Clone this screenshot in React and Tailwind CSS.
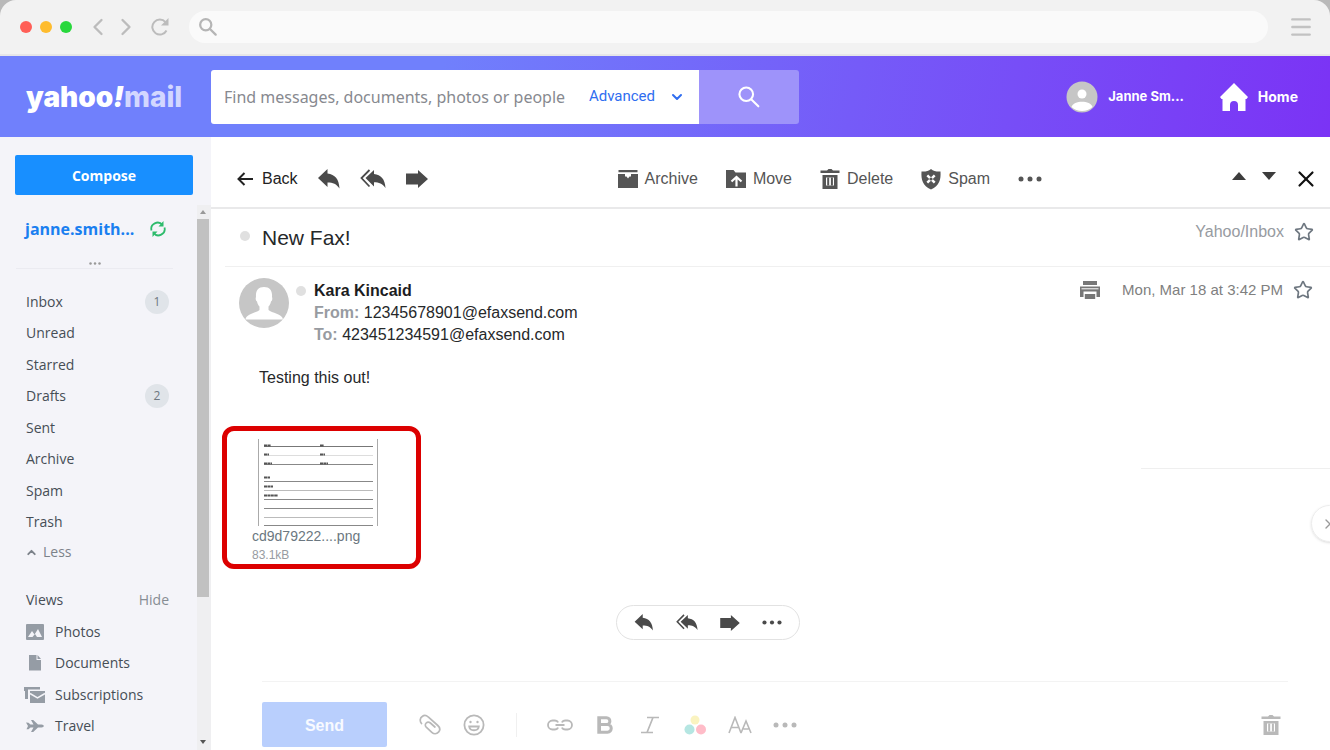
import React, { useState } from 'react';
import { ChevronDown, ChevronLeft, ChevronRight, ChevronUp, Menu, Star, X } from 'lucide-react';

const folders = [
  { name: 'Inbox', count: 1 },
  { name: 'Unread' },
  { name: 'Starred' },
  { name: 'Drafts', count: 2 },
  { name: 'Sent' },
  { name: 'Archive' },
  { name: 'Spam' },
  { name: 'Trash' },
];

const SearchIcon = ({ className = 'w-5 h-5', strokeWidth = 2.2 }) => (
  <svg viewBox="0 0 20 20" className={className} fill="none" stroke="currentColor" strokeWidth={strokeWidth} strokeLinecap="round">
    <circle cx="7.500" cy="7.500" r="6.200" />
    <path d="m12.200 12.200 6.300 6.300" />
  </svg>
);

const ReloadIcon = () => (
  <svg viewBox="0 0 18 18" className="w-[18px] h-[18px]" fill="none" stroke="currentColor" strokeWidth="2">
    <path d="M15.500 12.500A7.500 7.500 0 1 1 14.500 4.200" />
    <path d="M17.500 0v7.500H10Z" fill="currentColor" stroke="none" />
  </svg>
);

const ReplyIcon = ({ className = 'w-[22px] h-5' }) => (
  <svg viewBox="0 0 22 20" className={className} fill="currentColor">
    <path d="M0 9 9.500 0v4.500C17 5.500 21 10 21.500 19.500 18.500 15 15 13.500 9.500 13.500V18Z" />
  </svg>
);

const ReplyAllIcon = ({ className = 'w-[26px] h-5' }) => (
  <svg viewBox="0 0 26 20" className={className} fill="currentColor">
    <path d="M5.500 9 14 1v4c7 .8 11 5 11.500 14-3-4.500-6.500-5.800-11.500-5.800V17.500Z" />
    <path d="M9.500 1 1.500 9l8 8.500" fill="none" stroke="currentColor" strokeWidth="1.800" />
  </svg>
);

const ForwardIcon = ({ className = 'w-[22px] h-[18px]' }) => (
  <svg viewBox="0 0 22 18" className={className} fill="currentColor">
    <path d="M0 3.500h12V0L22 9l-10 9v-3.500H0Z" />
  </svg>
);

const DotsIcon = ({ className = 'w-6 h-1.5' }) => (
  <svg viewBox="0 0 24 6" className={className} fill="currentColor">
    <circle cx="3" cy="3" r="2.500" />
    <circle cx="12" cy="3" r="2.500" />
    <circle cx="21" cy="3" r="2.500" />
  </svg>
);

const ArchiveIcon = () => (
  <svg viewBox="0 0 20 20" className="w-5 h-5" fill="currentColor">
    <path d="M.5 1h19v2.300H.5zM0 5h7v2.500h1.500L10 9.500l1.500-2H13V5h7v14H0Z" />
  </svg>
);

const MoveIcon = () => (
  <svg viewBox="0 0 20 20" className="w-5 h-5">
    <path d="M0 1h7.500l2 2.500H20V19H0Z" fill="currentColor" />
    <path d="M5.500 12.500 10.500 8l5 4.500M10.500 9v8.500" fill="none" stroke="#fff" strokeWidth="2.200" />
  </svg>
);

const TrashIcon = ({ className = 'w-5 h-5' }) => (
  <svg viewBox="0 0 20 20" className={className}>
    <path d="M.5 1.500H7L8.500 0h3L13 1.500h6.500V4H.5ZM2.500 6h15v14h-15Z" fill="currentColor" />
    <path d="M6 8.500h8v8H6z" fill="#fff" />
    <path d="M7.200 8.500h2v8h-2zM10.900 8.500h2v8h-2z" fill="currentColor" />
  </svg>
);

const SpamIcon = () => (
  <svg viewBox="0 0 20 21" className="w-5 h-[21px]">
    <path d="M10 0c2.500 2 5.500 2.800 9.500 2.500.5 8-1 14-9.500 18C1.500 16.500 0 10.500.5 2.500 4.500 2.800 7.500 2 10 0Z" fill="currentColor" />
    <path d="m6.300 6.300 7.400 7.400M13.700 6.300l-7.400 7.400" fill="none" stroke="#fff" strokeWidth="2.400" />
    <circle cx="10" cy="10" r="1.600" fill="currentColor" />
  </svg>
);

const PrintIcon = () => (
  <svg viewBox="0 0 20 20" className="w-5 h-5" fill="#777">
    <path d="M3 1h14v4H3zM0 6.500h20V17h-3.500v-5.500h-13V17H0zM4.800 14h10.400v5H4.800z" />
    <path d="M1.500 8.300h17v1h-17z" fill="#fff" />
  </svg>
);

const PhotosIcon = () => (
  <svg viewBox="0 0 18 16" className="w-[18px] h-4">
    <rect width="18" height="16" rx="1" fill="currentColor" />
    <path d="m2 13 4-6 2.500 3.500L12 5l4 8Z" fill="#f4f4f9" />
    <path d="m6.500 13 2.500-3 2 3Z" fill="currentColor" />
  </svg>
);

const DocumentIcon = () => (
  <svg viewBox="0 0 14 16" className="w-3.5 h-4" fill="currentColor">
    <path d="M1 0h7.500v5H13v10.500H1ZM9.500 0 13 4H9.500Z" />
  </svg>
);

const SubscriptionsIcon = () => (
  <svg viewBox="0 0 22 18" className="w-[22px] h-[18px]">
    <path d="M0 1h16v2.500H4V13H1V5H0Z" fill="currentColor" />
    <path d="M6 5h15v12H6z" fill="currentColor" />
    <path d="m6 7.500 7.500 4.500L21 7.500" fill="none" stroke="#f4f4f9" strokeWidth="1.500" />
  </svg>
);

const TravelIcon = () => (
  <svg viewBox="0 0 18 14" className="w-[18px] h-3.5" fill="currentColor">
    <path d="m0 3.500 2.500.3L4.500 5.500h3L5 1h2.200l4.800 4.500h3.500c3 0 3 3 0 3H12L7.200 13H5l2.500-4.500h-3l-2 1.700H.5L2 7Z" />
  </svg>
);

const HomeIcon = () => (
  <svg viewBox="0 0 28 28" className="w-7 h-7" fill="currentColor">
    <path d="M14 0 28 14l-1.500 2H25.500v12H18v-6a4 4 0 0 0-8 0v6H2.500V16H1.500L0 14Z" />
  </svg>
);

const SyncIcon = () => (
  <svg viewBox="0 0 16 16" className="w-4 h-4" fill="none" stroke="currentColor" strokeWidth="1.800">
    <path d="M1.500 9.500A6.300 6.300 0 0 1 12.500 4M14.500 6.500A6.300 6.300 0 0 1 3.500 12" />
    <path d="M13.500 0v5.500H8.500ZM2.500 16v-5.500h5Z" fill="currentColor" stroke="none" />
  </svg>
);

const ClipIcon = () => (
  <svg viewBox="0 0 22 22" className="w-[22px] h-[22px]" fill="none" stroke="currentColor" strokeWidth="1.700" strokeLinecap="round">
    <path d="M2.500 9.500C.5 7 1 4 3.200 2.500 5 1 7.500 1.300 9.200 3l9.600 8.500c2.200 2 2.400 4.700.7 6.600-1.800 2-4.700 2-6.700.2L7.500 13.500C6 12 6 10.200 7.200 9c1.200-1.200 2.800-1.200 4.200 0l4.500 4" />
  </svg>
);

const SmileIcon = () => (
  <svg viewBox="0 0 22 22" className="w-[22px] h-[22px]" fill="none" stroke="currentColor" strokeWidth="1.800">
    <circle cx="11" cy="11" r="9.600" />
    <path d="M6.200 12.500c.5 5 9.100 5 9.600 0Z" />
    <circle cx="7.500" cy="8" r="1.200" fill="currentColor" stroke="none" />
    <circle cx="14.500" cy="8" r="1.200" fill="currentColor" stroke="none" />
  </svg>
);

const LinkIcon = () => (
  <svg viewBox="0 0 26 12" className="w-[26px] h-3" fill="none" stroke="currentColor" strokeWidth="1.800">
    <path d="M11 3.500C10.500 2 9 1.500 7.500 1.500H5.500a4.500 4.500 0 0 0 0 9h2c1.500 0 3-.5 3.500-2M15 3.500c.5-1.500 2-2 3.500-2h2a4.500 4.500 0 0 1 0 9h-2c-1.500 0-3-.5-3.500-2M8.500 6h9" />
  </svg>
);

const BoldIcon = () => (
  <svg viewBox="0 0 16 18" className="w-4 h-[18px]" fill="none" stroke="currentColor" strokeWidth="3">
    <path d="M1.800 1.800h7.700c4.500 0 4.500 6.700 0 6.700H3h7.500c5 0 5 7.700 0 7.700H1.800ZM2.500 1.500v15" />
  </svg>
);

const ItalicIcon = () => (
  <svg viewBox="0 0 18 18" className="w-[18px] h-[18px]" fill="none" stroke="currentColor" strokeWidth="1.700">
    <path d="M6 1.500h12M0 16.500h12M12 1.500l-6 15" />
  </svg>
);

const ColorIcon = () => (
  <svg viewBox="0 0 22 20" className="w-[22px] h-5">
    <circle cx="11" cy="5" r="4.500" fill="#faf3c0" />
    <circle cx="5.500" cy="14.500" r="5" fill="#b5e6e2" />
    <circle cx="17" cy="14.500" r="5" fill="#ffbcc8" />
  </svg>
);

const FontSizeIcon = () => (
  <svg viewBox="0 0 24 18" className="w-6 h-[18px]" fill="none" stroke="currentColor" strokeWidth="1.600">
    <path d="M1 17 7 1.500 13 17M3.500 11.500h7M13 17l5-12 5 12M15.500 13h5" />
  </svg>
);

const SenderAvatar = () => (
  <svg viewBox="0 0 50 50" className="w-[50px] h-[50px] shrink-0">
    <circle cx="25" cy="25" r="25" fill="#c6c6c6" />
    <path d="M25 9c6 0 8.500 4 8 10 .8 1.500 0 4-1 4.500-.5 2.500-1.500 4-2.500 5v3.500c3 3 14 3.500 14.500 9.500H6.500C7 35.500 17.500 35 20.500 32v-3.500c-1-1-2-2.500-2.500-5-1-.5-1.800-3-1-4.500-.5-6 2-10 8-10Z" fill="#fff" />
  </svg>
);

const UserAvatar = () => (
  <svg viewBox="0 0 32 32" className="w-8 h-8">
    <circle cx="16" cy="16" r="15.500" fill="#c6c6c6" />
    <circle cx="16" cy="13" r="4.500" fill="#fff" />
    <path d="M5.500 26c2-7 19-7 21 0a15.500 15.500 0 0 1-21 0Z" fill="#fff" />
  </svg>
);

// Form rows of the scanned fax page: y, left label width, right label width, line colour
const faxRows = [
  [8, 7, 4, '#777'],
  [17, 5, 5, '#ddd'],
  [26, 8, 8, '#888'],
  [43, 6, 0, '#888', 3],
  [52, 9, 0, '#bbb', 3],
  [61, 14, 0, '#888', 3],
  [70, 0, 0, '#888'],
  [79, 0, 0, '#bbb'],
  [87, 0, 0, '#888'],
];

const FaxThumb = () => (
  <svg viewBox="0 0 120 88" className="w-[120px] h-[88px]">
    <path d="M.5 0v87M119.500 0v87" stroke="#aaa" />
    {faxRows.map(([y, a, b, color, lift = 0]) => (
      <g key={y}>
        <path d={`M6 ${y - 0.5}h109`} stroke={color} />
        {a > 0 && <path d={`M6 ${y - 1.5 - lift}h${a}`} stroke="#555" strokeWidth="2" strokeDasharray="3 .4" />}
        {b > 0 && <path d={`M62 ${y - 1.5}h${b}`} stroke="#555" strokeWidth="2" strokeDasharray="3 .4" />}
      </g>
    ))}
  </svg>
);

function BrowserBar() {
  return (
    <div className="bg-[#b9b9b9] shrink-0">
      <div className="h-14 bg-[#f2f2f2] rounded-t-2xl border-b-2 border-[#e6e6e8] flex items-center pl-5 pr-4">
        <div className="flex gap-2">
          <span className="w-3 h-3 rounded-full bg-[#ff5f57]" />
          <span className="w-3 h-3 rounded-full bg-[#febc2e]" />
          <span className="w-3 h-3 rounded-full bg-[#28d83c]" />
        </div>
        <div className="flex items-center ml-3 text-[#bcbcbc]">
          <button type="button" aria-label="Previous page"><ChevronLeft size={28} strokeWidth={2} /></button>
          <button type="button" aria-label="Next page"><ChevronRight size={28} strokeWidth={2} /></button>
          <button type="button" aria-label="Reload" className="ml-[11px]"><ReloadIcon /></button>
        </div>
        <label className="flex-1 h-8 ml-5 mr-5 rounded-full bg-[#fafafa] flex items-center pl-2.5 text-[#b5b5b5]">
          <SearchIcon className="w-[18px] h-[18px]" strokeWidth={2.5} />
          <input type="text" aria-label="Address" className="flex-1 bg-transparent outline-none px-2 text-sm text-[#555]" />
        </label>
        <button type="button" aria-label="Browser menu" className="text-[#c2c2c2]"><Menu size={26} strokeWidth={2.2} /></button>
      </div>
    </div>
  );
}

function Header() {
  return (
    <header className="h-[81px] shrink-0 flex items-center bg-[linear-gradient(100deg,#7080fc_0%,#7080fc_33%,#755bf8_64%,#7b33f5_100%)] text-white">
      <a href="#" className="w-[211px] pl-[26px] font-['Inter',sans-serif] text-[28px] leading-8 font-black">
        yahoo<i>!</i><span className="font-extrabold text-[#d3d7ff]">mail</span>
      </a>
      <form className="w-[588px] h-[54px] flex" onSubmit={e => e.preventDefault()}>
        <div className="flex-1 min-w-0 bg-white rounded-l-[3px] flex items-center pl-[13px] pr-3.5">
          <input
            type="text" aria-label="Search mail" placeholder="Find messages, documents, photos or people"
            className="flex-1 min-w-0 outline-none font-['Noto_Sans',sans-serif] text-base text-[#333] placeholder:text-[#87898f]"
          />
          <button type="button" className="flex items-center gap-3.5 font-['Roboto',sans-serif] text-[15px] text-[#2f6df0]">
            Advanced <ChevronDown size={16} strokeWidth={3} />
          </button>
        </div>
        <button type="submit" aria-label="Search" className="w-[100px] bg-[#9e93fa] rounded-r-[3px] flex items-center justify-center">
          <SearchIcon className="w-[22px] h-[22px]" strokeWidth={1.9} />
        </button>
      </form>
      <nav className="ml-auto pr-8 flex items-center gap-9 font-['Inter',sans-serif] font-bold">
        <a href="#" className="flex items-center gap-2.5 text-[13px]"><UserAvatar />Janne Sm...</a>
        <a href="#" className="flex items-center gap-2.5 text-sm"><HomeIcon />Home</a>
      </nav>
    </header>
  );
}

function Sidebar() {
  const views = [
    { name: 'Photos', icon: <PhotosIcon /> },
    { name: 'Documents', icon: <DocumentIcon /> },
    { name: 'Subscriptions', icon: <SubscriptionsIcon /> },
    { name: 'Travel', icon: <TravelIcon /> },
  ];

  return (
    <aside className="w-[211px] shrink-0 bg-[#f4f4f9] flex flex-col font-['Open_Sans',sans-serif] text-sm text-[#464e56]">
      <button type="button" className="mt-[18px] ml-[15px] mr-[18px] h-10 pt-0.5 shrink-0 rounded-[2px] bg-[#188fff] text-white font-bold">
        Compose
      </button>
      <div className="flex-1 min-h-0 flex mt-2.5">
        <div className="flex-1 min-w-0 overflow-hidden">
          <div className="h-12 pl-[25px] pr-[31px] flex items-center justify-between">
            <a href="#" className="text-base font-bold text-[#1a7ff0]">janne.smith...</a>
            <button type="button" aria-label="Refresh" className="text-[#2dbb6c]"><SyncIcon /></button>
          </div>
          <div className="mt-1.5 mb-[17px] ml-4 mr-6 h-2.5 border-b border-[#ebebf1] flex items-center justify-center">
            <DotsIcon className="w-3 h-[3px] text-[#999]" />
          </div>
          <ul className="grid grid-rows-8 h-[252px] pl-[26px] pr-7">
            {folders.map(f => (
              <li key={f.name} className="flex items-center justify-between">
                <a href="#">{f.name}</a>
                {f.count && (
                  <span className="w-6 h-6 rounded-full bg-[#e0e4e9] flex items-center justify-center text-xs text-[#6e7780]">{f.count}</span>
                )}
              </li>
            ))}
          </ul>
          <button type="button" className="h-7 pl-[25px] flex items-center gap-[5px] text-[#7c828a]">
            <ChevronUp size={13} strokeWidth={3.5} /> Less
          </button>
          <div className="mt-[18px] h-8 pl-[26px] pr-7 flex items-center justify-between">
            <span>Views</span>
            <button type="button" className="text-[#878d94]">Hide</button>
          </div>
          <ul className="grid grid-rows-4 h-[126px] pl-6">
            {views.map(v => (
              <li key={v.name}>
                <a href="#" className="h-full flex items-center gap-[9px]">
                  <span className="w-[22px] flex justify-center text-[#959ca5]">{v.icon}</span>
                  {v.name}
                </a>
              </li>
            ))}
          </ul>
        </div>
        <div className="w-3.5 pr-0.5 bg-[#efeff1] flex flex-col items-center">
          <svg viewBox="0 0 6 4" className="w-1.5 h-1 my-[5px] shrink-0" fill="#999"><path d="M3 0 6 4H0Z" /></svg>
          <div className="w-full h-[378px] bg-[#c1c1c1]" />
          <svg viewBox="0 0 6 4" className="w-1.5 h-1 mt-auto mb-1.5 shrink-0" fill="#555"><path d="M0 0h6L3 4Z" /></svg>
        </div>
      </div>
    </aside>
  );
}

function Toolbar() {
  return (
    <div className="h-[72px] shrink-0 border-b-2 border-[#e9e9ea] pt-3.5 pl-[26px] pr-[15px] flex items-center justify-between text-base text-[#4a4a4a]">
      <div className="flex items-center">
        <button type="button" className="flex items-center gap-[9px] text-[#222]">
          <svg viewBox="0 0 16 14" className="w-4 h-3.5" fill="none" stroke="currentColor" strokeWidth="2">
            <path d="M16 7H1.500M7.500 1l-6 6 6 6" />
          </svg>
          Back
        </button>
        <button type="button" aria-label="Reply" className="ml-5"><ReplyIcon /></button>
        <button type="button" aria-label="Reply all" className="ml-5"><ReplyAllIcon /></button>
        <button type="button" aria-label="Forward" className="ml-5"><ForwardIcon /></button>
      </div>
      <div className="flex items-center gap-7 text-[#555]">
        <button type="button" className="flex items-center gap-[7px]"><ArchiveIcon />Archive</button>
        <button type="button" className="flex items-center gap-[7px]"><MoveIcon />Move</button>
        <button type="button" className="flex items-center gap-[7px]"><TrashIcon />Delete</button>
        <button type="button" className="flex items-center gap-[7px]"><SpamIcon />Spam</button>
        <button type="button" aria-label="More"><DotsIcon /></button>
      </div>
      <div className="flex items-center text-[#3c3c3c]">
        <button type="button" aria-label="Previous message" className="mb-1.5">
          <svg viewBox="0 0 14 8" className="w-3.5 h-2" fill="currentColor"><path d="M7 0l7 8H0Z" /></svg>
        </button>
        <button type="button" aria-label="Next message" className="ml-4 mb-1.5">
          <svg viewBox="0 0 14 8" className="w-3.5 h-2" fill="currentColor"><path d="M0 0h14L7 8Z" /></svg>
        </button>
        <button type="button" aria-label="Close" className="ml-[17px] text-[#111]"><X size={26} strokeWidth={2} className="-mr-1" /></button>
      </div>
    </div>
  );
}

function Message() {
  const [starred, setStarred] = useState(false);
  const starFill = starred ? '#f5b400' : 'none';

  return (
    <>
      <div className="ml-3.5 h-[58px] shrink-0 border-b border-[#f0f0f0] pl-[15px] pr-4 flex items-center">
        <span className="mb-[3px] w-2.5 h-2.5 rounded-full bg-[#e0e0e0]" />
        <h1 className="ml-3 text-[21px] text-[#26282a]">New Fax!</h1>
        <span className="ml-auto mb-[11px] text-base text-[#979ba1]">Yahoo/Inbox</span>
        <button type="button" aria-label="Star conversation" className="ml-2.5 mb-[11px] text-[#6e7780]"><Star size={20} strokeWidth={2} /></button>
      </div>

      <div className="pl-7 pr-[17px] pt-[11px] flex items-start shrink-0">
        <SenderAvatar />
        <span className="mt-2 ml-[7px] w-2.5 h-2.5 rounded-full bg-[#e0e0e0]" />
        <div className="ml-2 pt-0.5 text-base leading-[22px] text-[#26282a]">
          <p className="font-bold text-[#1d1d1f]">Kara Kincaid</p>
          <p><b className="text-[#979ba1]">From:</b> 12345678901@efaxsend.com</p>
          <p><b className="text-[#979ba1]">To:</b> 423451234591@efaxsend.com</p>
        </div>
        <div className="ml-auto flex items-center text-[15px] leading-6 text-[#808080]">
          <button type="button" aria-label="Print"><PrintIcon /></button>
          <time className="ml-[22px]">Mon, Mar 18 at 3:42 PM</time>
          <button type="button" aria-label="Star message" className="ml-2.5 text-[#6e7780]" onClick={() => setStarred(!starred)}>
            <Star size={20} strokeWidth={2} fill={starFill} />
          </button>
        </div>
      </div>

      <p className="mt-5 pl-12 text-base text-[#26282a] shrink-0">Testing this out!</p>

      <div className="mt-9 pl-[11px] flex justify-between items-start shrink-0">
        <a href="#" className="w-[199px] h-[143px] border-[5px] border-[#dc0000] rounded-xl pl-[25px] pt-2 flex flex-col">
          <span className="pl-1.5"><FaxThumb /></span>
          <span className="text-sm leading-[18px] text-[#6b7780]">cd9d79222....png</span>
          <span className="text-xs leading-5 text-[#979ba1]">83.1kB</span>
        </a>
        <div className="w-[189px] mt-[42px] border-t border-[#efefef] pt-9 flex justify-end">
          <button type="button" aria-label="Show panel" className="-mr-[18px] w-[37px] h-[37px] rounded-full border border-[#ececec] shadow-sm flex items-center pl-2 text-[#999]">
            <ChevronRight size={16} strokeWidth={2} />
          </button>
        </div>
      </div>

      <div className="mt-9 pr-[125px] flex justify-center shrink-0">
        <div className="h-[35px] px-[17px] border border-[#e2e2e2] rounded-full flex items-center gap-[22px] text-[#4a4a4a]">
          <button type="button" aria-label="Reply"><ReplyIcon className="w-5 h-[17px]" /></button>
          <button type="button" aria-label="Reply all"><ReplyAllIcon className="w-[22px] h-[17px]" /></button>
          <button type="button" aria-label="Forward"><ForwardIcon className="w-5 h-4" /></button>
          <button type="button" aria-label="More"><DotsIcon className="w-5 h-[5px]" /></button>
        </div>
      </div>
    </>
  );
}

function ComposeBar() {
  return (
    <div className="mt-auto ml-[51px] mr-[42px] border-t border-[#f3f3f3] pt-5 pb-[3px] flex items-center shrink-0 text-[#b9b9b9]">
      <button type="button" className="w-[125px] h-[45px] pt-0.5 rounded-[2px] bg-[#b9cffd] text-white/90 text-base font-bold">Send</button>
      <div className="ml-[21px] flex items-center">
        <button type="button" aria-label="Attach" className="w-11 flex justify-center"><ClipIcon /></button>
        <button type="button" aria-label="Emoji" className="w-11 flex justify-center"><SmileIcon /></button>
        <span className="mx-5 w-px h-6 bg-[#f0f0f0]" />
        <button type="button" aria-label="Link" className="w-[45px] flex justify-center"><LinkIcon /></button>
        <button type="button" aria-label="Bold" className="w-[45px] flex justify-center"><BoldIcon /></button>
        <button type="button" aria-label="Italic" className="w-[45px] flex justify-center"><ItalicIcon /></button>
        <button type="button" aria-label="Text color" className="w-[45px] flex justify-center"><ColorIcon /></button>
        <button type="button" aria-label="Text size" className="w-[45px] flex justify-center"><FontSizeIcon /></button>
        <button type="button" aria-label="More" className="w-[45px] flex justify-center"><DotsIcon className="w-6 h-1.5" /></button>
      </div>
      <button type="button" aria-label="Delete draft" className="ml-auto mr-[7px]"><TrashIcon /></button>
    </div>
  );
}

export default function App() {
  return (
    <div className="h-screen flex flex-col overflow-hidden bg-white font-['Liberation_Sans',Arial,sans-serif]">
      <BrowserBar />
      <Header />
      <div className="flex-1 min-h-0 flex">
        <Sidebar />
        <main className="flex-1 min-w-0 flex flex-col overflow-hidden">
          <Toolbar />
          <Message />
          <ComposeBar />
        </main>
      </div>
    </div>
  );
}
